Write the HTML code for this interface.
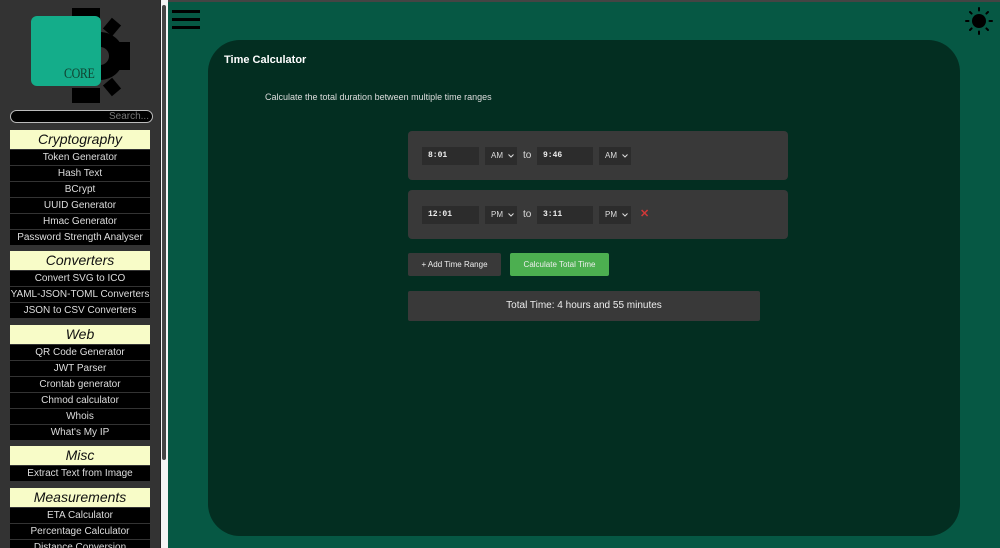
<!DOCTYPE html>
<html><head><meta charset="utf-8"><style>
*{box-sizing:border-box;margin:0;padding:0}
html,body{width:1000px;height:548px;overflow:hidden}
body{background:#065844;font-family:"Liberation Sans",sans-serif;position:relative}
.top{position:absolute;left:0;top:0;width:1000px;height:2px;background:#444}
.side{position:absolute;left:0;top:0;width:160px;height:548px;background:#333;overflow:hidden}
.scroll{position:absolute;left:160px;top:0;width:8px;height:548px;background:#f4f4f4;border-left:1px solid #222}
.thumb{position:absolute;left:162px;top:5px;width:4px;height:455px;background:#444;border-radius:2px}
.logo-sq{position:absolute;left:31px;top:16px;width:70px;height:70px;background:#14ad8a;border-radius:6px}
.core{position:absolute;left:64px;top:66px;font-family:"Liberation Serif",serif;font-size:15px;color:#143;transform:scaleX(0.8);transform-origin:left top;letter-spacing:-0.5px}
.search{position:absolute;left:10px;top:110px;width:143px;height:13px;background:#000;border:1px solid #bbb;border-radius:7px;color:#777;font-size:10px;text-align:right;padding-right:3px;line-height:11px}
.grp{position:absolute;left:10px;width:140px}
.h{background:#f8fcc8;color:#111;font-style:italic;font-size:14px;text-align:center;height:19px;line-height:19px}
.i{background:#000;color:#ddd;font-size:10px;text-align:center;height:15px;line-height:15px;margin-top:1px;white-space:nowrap}
.ham{position:absolute;left:172px;top:10px;width:28px}
.ham div{height:3px;background:#000;margin-bottom:5px}
.card{position:absolute;left:208px;top:40px;width:752px;height:496px;background:#032e21;border-radius:32px}
.title{position:absolute;left:224px;top:54px;color:#fff;font-weight:bold;font-size:11px}
.sub{position:absolute;left:265px;top:92px;color:#ddd;font-size:9px}
.row{position:absolute;left:408px;width:380px;height:49px;background:#393939;border-radius:4px}
.in{position:absolute;top:16px;height:18px;background:#2c2c2c;color:#eee;font-family:"Liberation Mono",monospace;font-size:8px;font-weight:bold;line-height:18px;padding-left:6px}
.sel{position:absolute;top:16px;width:32px;height:18px;background:#2c2c2c;color:#ddd;font-size:8px;line-height:18px;padding-left:6px}
.sel svg{position:absolute;left:23px;top:7px}
.to{position:absolute;top:19px;color:#ddd;font-size:10px}
.btn{position:absolute;top:253px;height:23px;line-height:23px;font-size:8px;color:#eee;text-align:center;border-radius:2px}
.tot{position:absolute;left:408px;top:291px;width:352px;height:30px;background:#393939;color:#eee;font-size:10px;line-height:30px;text-align:center;border-radius:2px}
</style></head><body>
<div class="top"></div>
<div class="side">
<svg style="position:absolute;left:0;top:0" width="160" height="110" viewBox="0 0 160 110">
<rect x="72" y="8" width="28" height="10" fill="#000"/>
<rect x="72" y="88" width="28" height="15" fill="#000"/>
<circle cx="100" cy="56" r="24" fill="#000"/>
<rect x="118" y="42" width="12" height="28" fill="#000"/>
<rect x="106" y="20" width="12" height="14" fill="#000" transform="rotate(40 112 27)"/>
<rect x="106" y="80" width="12" height="14" fill="#000" transform="rotate(-40 112 87)"/>
<circle cx="100" cy="56" r="9" fill="#333"/>
</svg>
<div class="logo-sq"></div><div class="core">CORE</div>
<div class="search">Search...</div>
<div class="grp" style="top:130px"><div class="h">Cryptography</div><div class="i">Token Generator</div><div class="i">Hash Text</div><div class="i">BCrypt</div><div class="i">UUID Generator</div><div class="i">Hmac Generator</div><div class="i">Password Strength Analyser</div></div>
<div class="grp" style="top:251px"><div class="h">Converters</div><div class="i">Convert SVG to ICO</div><div class="i">YAML-JSON-TOML Converters</div><div class="i">JSON to CSV Converters</div></div>
<div class="grp" style="top:325px"><div class="h">Web</div><div class="i">QR Code Generator</div><div class="i">JWT Parser</div><div class="i">Crontab generator</div><div class="i">Chmod calculator</div><div class="i">Whois</div><div class="i">What's My IP</div></div>
<div class="grp" style="top:446px"><div class="h">Misc</div><div class="i">Extract Text from Image</div></div>
<div class="grp" style="top:488px"><div class="h">Measurements</div><div class="i">ETA Calculator</div><div class="i">Percentage Calculator</div><div class="i">Distance Conversion</div></div>
</div>
<div class="scroll"></div><div class="thumb"></div>
<div class="ham"><div></div><div></div><div></div></div>
<svg style="position:absolute;left:964px;top:6px" width="30" height="30" viewBox="0 0 30 30"><circle cx="15" cy="15" r="7" fill="#000"/><g stroke="#000" stroke-width="2" stroke-linecap="round"><path d="M15 2v2.5M15 25.5v2.5M2 15h2.5M25.5 15h2.5M6 6l1.6 1.6M22.4 22.4l1.6 1.6M24 6l-1.6 1.6M7.6 22.4l-1.6 1.6"/></g></svg>
<div class="card"></div>
<div class="title">Time Calculator</div>
<div class="sub">Calculate the total duration between multiple time ranges</div>
<div class="row" style="top:131px">
<div class="in" style="left:14px;width:57px">8:01</div><div class="sel" style="left:77px">AM<svg width="6" height="4" viewBox="0 0 6 4"><path d="M0.5 0.5L3 3L5.5 0.5" stroke="#ddd" fill="none"/></svg></div><div class="to" style="left:115px">to</div><div class="in" style="left:129px;width:56px">9:46</div><div class="sel" style="left:191px">AM<svg width="6" height="4" viewBox="0 0 6 4"><path d="M0.5 0.5L3 3L5.5 0.5" stroke="#ddd" fill="none"/></svg></div></div>
<div class="row" style="top:190px">
<div class="in" style="left:14px;width:57px">12:01</div><div class="sel" style="left:77px">PM<svg width="6" height="4" viewBox="0 0 6 4"><path d="M0.5 0.5L3 3L5.5 0.5" stroke="#ddd" fill="none"/></svg></div><div class="to" style="left:115px">to</div><div class="in" style="left:129px;width:56px">3:11</div><div class="sel" style="left:191px">PM<svg width="6" height="4" viewBox="0 0 6 4"><path d="M0.5 0.5L3 3L5.5 0.5" stroke="#ddd" fill="none"/></svg></div><div style="position:absolute;left:232px;top:17px;color:#d03838;font-size:11px;font-weight:bold">✕</div></div>
<div class="btn" style="left:408px;width:93px;background:#393939">+ Add Time Range</div>
<div class="btn" style="left:510px;width:99px;background:#4caf50">Calculate Total Time</div>
<div class="tot">Total Time: 4 hours and 55 minutes</div>
</body></html>
